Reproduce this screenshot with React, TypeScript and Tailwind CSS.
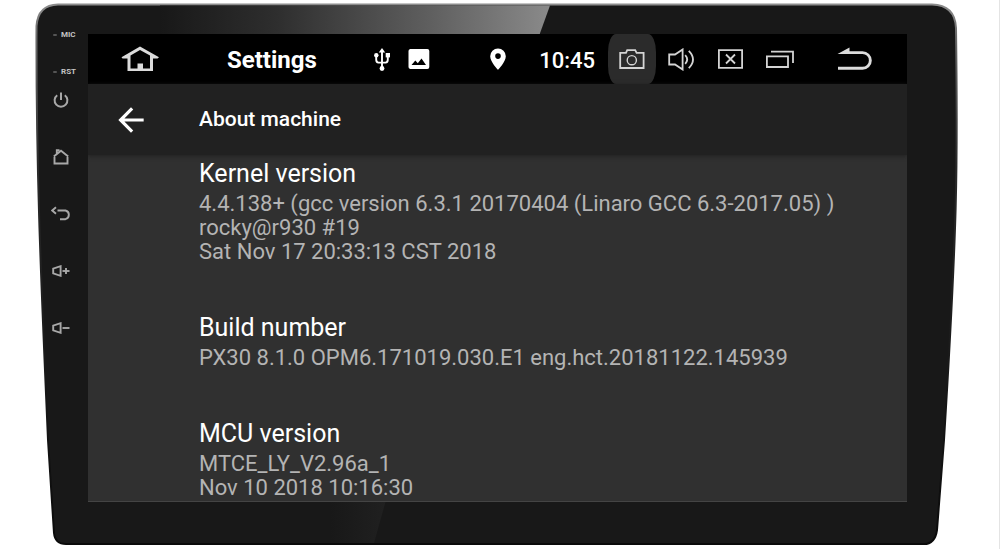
import React from 'react'
import { MdArrowBack } from 'react-icons/md'

interface AboutEntry {
  title: string
  lines: string[]
}

const entries: AboutEntry[] = [
  {
    title: 'Kernel version',
    lines: [
      '4.4.138+ (gcc version 6.3.1 20170404 (Linaro GCC 6.3-2017.05) )',
      'rocky@r930 #19',
      'Sat Nov 17 20:33:13 CST 2018',
    ],
  },
  {
    title: 'Build number',
    lines: ['PX30 8.1.0 OPM6.171019.030.E1 eng.hct.20181122.145939'],
  },
  {
    title: 'MCU version',
    lines: ['MTCE_LY_V2.96a_1', 'Nov 10 2018 10:16:30'],
  },
]

// Tapered glossy housing of the head unit
const Housing: React.FC = () => (
  <svg
    className="absolute inset-0 h-full w-full"
    viewBox="0 0 1000 549"
    preserveAspectRatio="none"
    aria-hidden="true"
  >
    <defs>
      <linearGradient id="glare" gradientUnits="userSpaceOnUse" x1="160" y1="0" x2="550" y2="0">
        <stop offset="0" stopColor="#181818" />
        <stop offset="0.3" stopColor="#2e2e2e" />
        <stop offset="0.7" stopColor="#606060" />
        <stop offset="1" stopColor="#8a8a8a" />
      </linearGradient>
      <linearGradient id="glareLow" gradientUnits="userSpaceOnUse" x1="330" y1="0" x2="386" y2="0">
        <stop offset="0" stopColor="#181818" />
        <stop offset="1" stopColor="#202020" />
      </linearGradient>
      <linearGradient id="rim" x1="0" y1="0" x2="0" y2="1">
        <stop offset="0" stopColor="#8c8c8c" />
        <stop offset="0.06" stopColor="#6a6a6a" />
        <stop offset="0.3" stopColor="#2a2a2a" />
        <stop offset="1" stopColor="#0a0a0a" />
      </linearGradient>
    </defs>
    <path
      d="M58 4.5H932Q955 5 956 28C958 170 957 230 944 440L937 530Q935 544 924 544H66Q55 544 54 533L48 440C42 300 36 180 36.5 26Q38 5 58 4.5Z"
      fill="#181818"
      stroke="url(#rim)"
      strokeWidth="2"
    />
    <path d="M160 5.5H550L539 36H160Z" fill="url(#glare)" />
    <path d="M330 500H386L374 543H330Z" fill="url(#glareLow)" />
    <path d="M999.5 0V549" stroke="#e4e4e4" />
  </svg>
)

const PowerIcon: React.FC = () => (
  <svg className="h-4 w-4" viewBox="0 0 16 16" fill="none" stroke="currentColor" strokeWidth="2">
    <path d="M8 0.5V8M4.2 3.2A6.4 6.4 0 1 0 11.8 3.2" />
  </svg>
)

const SideHomeIcon: React.FC = () => (
  <svg className="h-4 w-4" viewBox="0 0 16 16" fill="none" stroke="currentColor" strokeWidth="1.9">
    <path d="M1.5 8V14.5H14.5V8M0.8 7.5L8 1.8L15.2 7.5M3.8 5.5V1.2H6.5" />
  </svg>
)

const SideBackIcon: React.FC = () => (
  <svg className="h-4 w-5" viewBox="0 0 20 16" fill="none" stroke="currentColor" strokeWidth="1.9">
    <path d="M5 1.2L1.2 4.5L5 7.8M6.5 4.5H14.5A4.5 4.5 0 0 1 14.5 13.2H9" />
  </svg>
)

const VolumeKeyIcon: React.FC<{ up?: boolean }> = ({ up }) => (
  <svg className="h-3 w-[18px]" viewBox="0 0 18 12" fill="none" stroke="currentColor" strokeWidth="1.9">
    <path d="M1.2 3.6L8.6 1.2V10.8L1.2 8.4Z" />
    <path d="M10.5 6H17.5" />
    {up && <path d="M14 3V9" />}
  </svg>
)

const HomeIcon: React.FC = () => (
  <svg className="h-[26px] w-[38px]" viewBox="0 0 38 26" fill="#dcdcdc">
    <path
      fillRule="evenodd"
      d="M19 0.5L38 11.2L36.5 12.5H32V25H6.5V12.5H1.5L0.5 11.2ZM19 4L9.5 9.6V22.5H16.5V17.5H22V22.5H29V9.6Z"
    />
  </svg>
)

const UsbIcon: React.FC = () => (
  <svg className="h-[23px] w-4" viewBox="0 0 16 23" fill="none" stroke="currentColor" strokeWidth="1.9">
    <path d="M8 3V21M2.2 7V11.5Q2.2 14.4 4.5 14.6H11.5Q13.8 14.4 13.8 11.5V7" />
    <path d="M8 0L11.2 4.6H4.8Z" fill="currentColor" stroke="none" />
    <circle cx="8" cy="20.5" r="2.4" fill="currentColor" stroke="none" />
    <circle cx="2.3" cy="7.2" r="2.2" fill="currentColor" stroke="none" />
    <path d="M11.7 5H16V9.4H11.7Z" fill="currentColor" stroke="none" />
  </svg>
)

const PictureIcon: React.FC = () => (
  <svg className="h-5 w-[22px]" viewBox="0 0 22 20" fill="currentColor">
    <path
      fillRule="evenodd"
      d="M2.2 0H19.3A2 2 0 0 1 21.3 2V18A2 2 0 0 1 19.3 20H2.2A2 2 0 0 1 0.5 18V2A2 2 0 0 1 2.2 0ZM3.5 16H18L13.5 9.5L9.8 14.2L7.3 11.4Z"
    />
  </svg>
)

const PinIcon: React.FC = () => (
  <svg className="h-[22px] w-4" viewBox="0 0 16 22" fill="currentColor">
    <path
      fillRule="evenodd"
      d="M8 0.5A7.8 7.8 0 0 1 15.8 8.3C15.8 14 8 21.8 8 21.8S0.2 14 0.2 8.3A7.8 7.8 0 0 1 8 0.5ZM8 5.3A2.8 2.8 0 1 0 8 10.9A2.8 2.8 0 1 0 8 5.3Z"
    />
  </svg>
)

const CameraIcon: React.FC = () => (
  <svg className="h-5 w-[26px]" viewBox="0 0 26 20" fill="none" stroke="currentColor" strokeWidth="1.8">
    <path d="M1.2 3.8H7L8.2 1.1H16.2L17.6 3.8H24.6V19H1.2Z" />
    <circle cx="12.8" cy="11.2" r="4.6" strokeWidth="1.4" />
  </svg>
)

const VolumeIcon: React.FC = () => (
  <svg className="h-[23px] w-[27px]" viewBox="0 0 27 23" fill="none" stroke="currentColor" strokeWidth="1.8">
    <path d="M1.2 6.5H7L14.6 1.5V21.5L7 16.5H1.2Z" />
    <path d="M17.2 7.2Q21.2 11.5 17.2 15.8M20.8 2.8Q29.2 11.5 20.8 20.2" />
  </svg>
)

const CloseWindowIcon: React.FC = () => (
  <svg className="h-5 w-[25px]" viewBox="0 0 25 20" fill="none" stroke="currentColor" strokeWidth="1.8">
    <path d="M0.9 1.2H24.1V18.8H0.9ZM8 5.5L17 14.5M17 5.5L8 14.5" />
  </svg>
)

const WindowsIcon: React.FC = () => (
  <svg className="h-[18px] w-7" viewBox="0 0 28 18" fill="none" stroke="currentColor" strokeWidth="1.8">
    <path d="M0.9 6.3H22V17H0.9ZM5 1.6H27V13" />
  </svg>
)

const ReturnIcon: React.FC = () => (
  <svg className="h-6 w-9" viewBox="0 0 36 24" fill="#dcdcdc">
    <path d="M0.5 7L12.5 0.5V4.2H25.5A9.3 9.3 0 0 1 25.5 22.8H1V19.8H25.5A6.4 6.4 0 0 0 25.5 7Z" />
  </svg>
)

const sideKeys = [
  { label: 'Power', icon: <PowerIcon /> },
  { label: 'Home key', icon: <SideHomeIcon /> },
  { label: 'Back key', icon: <SideBackIcon /> },
  { label: 'Volume up', icon: <VolumeKeyIcon up /> },
  { label: 'Volume down', icon: <VolumeKeyIcon /> },
]

const SideKeys: React.FC = () => (
  <aside className="flex w-[38px] shrink-0 flex-col text-[#a8a8a8]">
    {['MIC', 'RST'].map((name) => (
      <div key={name} className="mb-[29px] flex h-2 items-center gap-1 last-of-type:mb-3">
        <span className="ml-[3px] h-[2px] w-1 rounded-full bg-[#555555]" />
        <span className="text-[8px] leading-2 font-bold text-[#c4c4c4]">{name}</span>
      </div>
    ))}
    <nav className="flex flex-col gap-[33px]">
      {sideKeys.map((key) => (
        <button
          key={key.label}
          type="button"
          aria-label={key.label}
          className="flex h-6 w-[22px] items-center justify-center"
        >
          {key.icon}
        </button>
      ))}
    </nav>
  </aside>
)

const StatusBar: React.FC = () => (
  <header className="flex h-[50px] items-center bg-black pr-[34px] pl-[33px] text-white">
    <button type="button" aria-label="Home">
      <HomeIcon />
    </button>
    <span className="ml-[68px] pt-0.5 text-2xl font-bold">Settings</span>
    <div className="ml-auto flex h-full items-center">
      <UsbIcon />
      <span className="ml-[18px]">
        <PictureIcon />
      </span>
      <span className="ml-[60px]">
        <PinIcon />
      </span>
      <time className="mr-[13px] ml-[33px] pt-0.5 text-[22px] font-medium">10:45</time>
      <div className="flex h-full items-center text-[#d4d4d4]">
        <button
          type="button"
          aria-label="Screenshot"
          className="flex h-full w-12 items-center justify-center rounded-[8px/18px] bg-[#2b2b2b]"
        >
          <CameraIcon />
        </button>
        <button type="button" aria-label="Volume" className="ml-3">
          <VolumeIcon />
        </button>
        <button type="button" aria-label="Close window" className="ml-[23px]">
          <CloseWindowIcon />
        </button>
        <button type="button" aria-label="Recent windows" className="ml-[23px]">
          <WindowsIcon />
        </button>
        <button type="button" aria-label="Back" className="ml-[43px]">
          <ReturnIcon />
        </button>
      </div>
    </div>
  </header>
)

const App: React.FC = () => {
  return (
    <div className="relative min-h-screen bg-white font-['Roboto',sans-serif]">
      <Housing />
      <div className="relative flex min-h-screen pr-[93px] pb-[47px] pl-[50px]">
        <div className="flex pt-[31px]">
          <SideKeys />
        </div>
        <main className="flex min-w-0 flex-1 flex-col overflow-hidden pt-[34px]">
          <StatusBar />
          <div className="z-10 flex h-[71px] items-center bg-[#212121] pl-6 text-white shadow-[0_1px_4px_#202020]">
            <button type="button" aria-label="Navigate up" className="w-[87px]">
              <MdArrowBack size={38} />
            </button>
            <h1 className="text-[21px] font-medium">About machine</h1>
          </div>
          <dl className="flex flex-1 flex-col gap-[50px] border-b border-[#444444] bg-[#303030] pt-[5px] pl-[111px]">
            {entries.map((entry) => (
              <div key={entry.title}>
                <dt className="text-[25px] leading-7 text-white">{entry.title}</dt>
                <dd className="mt-1 text-[22px] leading-6 text-[#b4b4b4]">
                  {entry.lines.map((line) => (
                    <p key={line}>{line}</p>
                  ))}
                </dd>
              </div>
            ))}
          </dl>
        </main>
      </div>
    </div>
  )
}

export default App
